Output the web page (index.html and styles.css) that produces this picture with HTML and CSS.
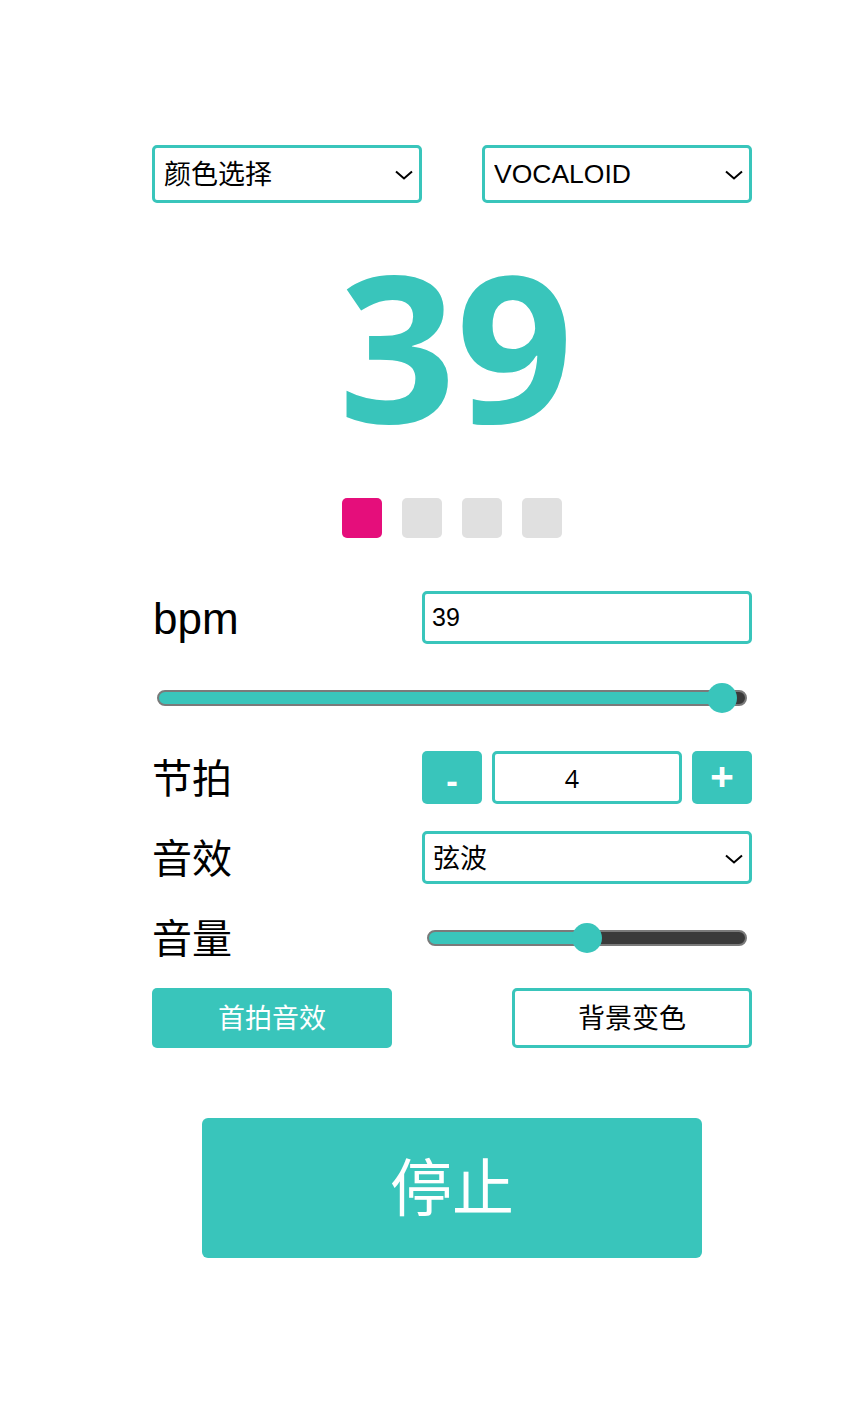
FILE: index.html
```html
<!DOCTYPE html>
<html lang="zh">
<head>
<meta charset="utf-8">
<title>节拍器</title>
<link rel="stylesheet" href="styles.css">
</head>
<body>
<div class="app">
  <div class="selects">
    <div class="select-wrap wide">
      <select class="select cjk"><option>颜色选择</option></select>
      <svg class="chev" width="18" height="10" viewBox="0 0 18 10"><path d="M1 1.5 L9 8.5 L17 1.5" fill="none" stroke="#000" stroke-width="2"/></svg>
    </div>
    <div class="select-wrap wide">
      <select class="select"><option>VOCALOID</option></select>
      <svg class="chev" width="18" height="10" viewBox="0 0 18 10"><path d="M1 1.5 L9 8.5 L17 1.5" fill="none" stroke="#000" stroke-width="2"/></svg>
    </div>
  </div>

  <div class="count">39</div>

  <div class="dots">
    <span class="dot on"></span>
    <span class="dot"></span>
    <span class="dot"></span>
    <span class="dot"></span>
  </div>

  <div class="row bpm-row">
    <span class="label latin">bpm</span>
    <input class="field text" type="text" value="39">
  </div>

  <input class="range bpm-range" type="range" min="0" max="1000" value="986" style="--p:96.1%">

  <div class="row beat-row">
    <span class="label">节拍</span>
    <div class="stepper">
      <button class="step minus">-</button>
      <input class="field beat" type="text" value="4">
      <button class="step plus">+</button>
    </div>
  </div>

  <div class="row sound-row">
    <span class="label">音效</span>
    <div class="select-wrap field-wrap">
      <select class="select small cjk"><option>弦波</option></select>
      <svg class="chev" width="18" height="10" viewBox="0 0 18 10"><path d="M1 1.5 L9 8.5 L17 1.5" fill="none" stroke="#000" stroke-width="2"/></svg>
    </div>
  </div>

  <div class="row vol-row">
    <span class="label">音量</span>
    <input class="range vol-range" type="range" min="0" max="100" value="50" style="--p:50%">
  </div>

  <div class="btn-row">
    <button class="btn filled">首拍音效</button>
    <button class="btn outline">背景变色</button>
  </div>

  <button class="stop">停止</button>
</div>
</body>
</html>
```

FILE: styles.css
```css
* { box-sizing: border-box; }

html, body {
  margin: 0;
  padding: 0;
  background: #ffffff;
}

body {
  font-family: "Liberation Sans", "Noto Sans CJK SC", sans-serif;
  color: #000;
}

.app {
  width: 600px;
  margin-left: 152px;
  padding-top: 145px;
  padding-bottom: 160px;
  display: flex;
  flex-direction: column;
}

.selects {
  display: flex;
  justify-content: space-between;
}

.select-wrap {
  position: relative;
  display: block;
}

.select-wrap.wide {
  width: 270px;
  height: 58px;
}

.select-wrap.field-wrap {
  width: 330px;
  height: 53px;
}

.select {
  -webkit-appearance: none;
  appearance: none;
  width: 100%;
  height: 100%;
  border: 3px solid #39c5bb;
  border-radius: 5px;
  background: #fff;
  padding: 0 30px 0 9px;
  font-family: "Liberation Sans", "Noto Sans CJK SC", sans-serif;
  font-size: 26.5px;
  color: #000;
  outline: none;
}

.select.cjk {
  font-family: "Noto Sans CJK SC", sans-serif;
  font-size: 27px;
  padding-bottom: 3px;
}

.select.small {
  padding-left: 8px;
}

.chev {
  position: absolute;
  right: 9px;
  top: 50%;
  margin-top: -4px;
  pointer-events: none;
}

.count {
  margin-top: 38px;
  height: 205px;
  font-family: "Open Sans", sans-serif;
  font-weight: 700;
  font-size: 205px;
  line-height: 205px;
  color: #39c5bb;
  text-align: center;
  padding-left: 8px;
}

.dots {
  margin-top: 52px;
  display: flex;
  justify-content: center;
  gap: 20px;
}

.dot {
  width: 40px;
  height: 40px;
  border-radius: 5px;
  background: #e0e0e0;
}

.dot.on {
  background: #e50e7b;
}

.row {
  display: flex;
  justify-content: space-between;
  align-items: center;
  height: 53px;
}

.label {
  font-family: "Noto Sans CJK SC", sans-serif;
  font-size: 40px;
  line-height: 53px;
  position: relative;
  top: -1px;
}

.label.latin {
  font-family: "Liberation Sans", sans-serif;
  font-size: 44px;
  top: 1px;
  padding-left: 1px;
}

.bpm-row { margin-top: 53px; }
.beat-row { margin-top: 45px; }
.sound-row { margin-top: 27px; }
.vol-row { margin-top: 27px; }

.field {
  border: 3px solid #39c5bb;
  border-radius: 5px;
  background: #fff;
  height: 53px;
  font-family: "Liberation Sans", sans-serif;
  font-size: 25px;
  color: #000;
  outline: none;
}

.field.text {
  width: 330px;
  padding: 0 7px;
}

.stepper {
  display: flex;
  gap: 10px;
  width: 330px;
}

.step {
  width: 60px;
  height: 53px;
  border: none;
  border-radius: 5px;
  background: #39c5bb;
  color: #fff;
  font-family: "Open Sans", sans-serif;
  font-weight: 700;
  line-height: 1;
  padding: 0;
}

.step.minus {
  font-size: 34px;
  padding-top: 4px;
}

.step.plus {
  font-size: 42px;
  padding-bottom: 4px;
}

.field.beat {
  width: 190px;
  text-align: center;
  padding: 0 30px 0 0;
  font-family: "Open Sans", sans-serif;
  font-size: 25px;
}

.range {
  -webkit-appearance: none;
  appearance: none;
  height: 16px;
  border: 2px solid #7a7a7a;
  border-radius: 8px;
  background: linear-gradient(to right, #39c5bb var(--p), #3a3a3a var(--p));
  margin: 0;
  padding: 0;
  outline: none;
}

.range::-webkit-slider-thumb {
  -webkit-appearance: none;
  appearance: none;
  width: 30px;
  height: 30px;
  border-radius: 50%;
  background: #39c5bb;
  border: none;
}

.bpm-range {
  width: 590px;
  margin: 46px 0 0 5px;
  align-self: flex-start;
}

.vol-range {
  width: 320px;
  margin-right: 5px;
}

.btn-row {
  margin-top: 24px;
  display: flex;
  justify-content: space-between;
}

.btn {
  width: 240px;
  height: 60px;
  border-radius: 5px;
  font-family: "Noto Sans CJK SC", sans-serif;
  font-size: 27px;
  line-height: 1;
  padding: 0 0 4px;
}

.btn.filled {
  background: #39c5bb;
  border: none;
  color: #fff;
}

.btn.outline {
  background: #fff;
  border: 3px solid #39c5bb;
  color: #000;
}

.stop {
  margin: 70px auto 0;
  width: 500px;
  height: 140px;
  border: none;
  border-radius: 6px;
  background: #39c5bb;
  color: #fff;
  font-family: "Noto Sans CJK SC", sans-serif;
  font-size: 62px;
  line-height: 1;
  padding: 0 0 8px;
}
```
